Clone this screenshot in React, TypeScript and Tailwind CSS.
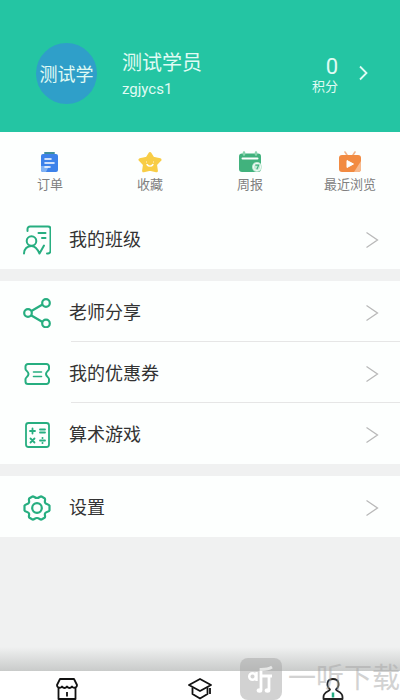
import React from 'react';

const OrderIcon = () => (
    <svg width="22" height="22" viewBox="0 0 22 22" fill="none">
        <rect x="5" y="1" width="11" height="2" rx="1" fill="#3f8f9c" />
        <rect x="2" y="3" width="17" height="18" rx="2" fill="#3d82ea" />
        <path d="M2 15h8l-3 6H4a2 2 0 0 1-2-2z" fill="#7fb2f5" />
        <path d="M6 8h6M6 12h9M6 16h5" stroke="#fff" strokeWidth="1.6" strokeLinecap="round" />
    </svg>
);

const StarIcon = () => (
    <svg width="24" height="22" viewBox="0 0 24 22" fill="none">
        <path
            d="M12 2.500l3 4.700 7 1.600-4.500 4.700.9 6.300-6.400-1.500-6.400 1.500.9-6.300L2 8.800l7-1.600z"
            fill="#f8cd46"
            stroke="#f8cd46"
            strokeWidth="3"
            strokeLinejoin="round"
        />
        <path d="M9 13.500c1.500 2.200 4.500 2.200 6 0" stroke="#fff" strokeWidth="1.400" strokeLinecap="round" />
        <path d="M8 11h1M15 11h1" stroke="#fff6cf" strokeWidth="1.200" />
    </svg>
);

const ReportIcon = () => (
    <svg width="24" height="22" viewBox="0 0 24 22" fill="none">
        <rect x="1" y="2.500" width="22" height="18.500" rx="3" fill="#41b27d" />
        <path d="M4.500 7.500h15" stroke="#fff" strokeWidth="2" strokeLinecap="round" />
        <path d="M6 1.500v2M18 1.500v2" stroke="#8ad3ae" strokeWidth="2.500" strokeLinecap="round" />
        <circle cx="19" cy="16" r="5" fill="#c4ead6" />
        <circle cx="19" cy="16" r="3.600" stroke="#fff" strokeWidth=".8" />
        <path d="M17.300 14.200h3.400l-1.900 4" stroke="#41b27d" strokeWidth="1.200" />
    </svg>
);

const HistoryIcon = () => (
    <svg width="24" height="22" viewBox="0 0 24 22" fill="none">
        <path d="M7 1l2 3M17 1l-2 3" stroke="#f2b48a" strokeWidth="1.600" strokeLinecap="round" />
        <rect x="1" y="4" width="22" height="17" rx="3" fill="#f28b42" />
        <path d="M23 10v8a3 3 0 0 1-3 3h-4z" fill="#f7b98d" />
        <path d="M9 9.500v7l6.500-3.500z" fill="#fff" stroke="#fff" strokeLinejoin="round" />
    </svg>
);

const ClassIcon = () => (
    <svg width="28" height="30" viewBox="0 0 28 30" fill="none" stroke="#27ae80" strokeWidth="2" strokeLinecap="round" strokeLinejoin="round">
        <path d="M4.500 6V4a2.500 2.500 0 0 1 2.500-2.500h18A2.500 2.500 0 0 1 27.500 4v22a2.500 2.500 0 0 1-2.500 2.500h-1" />
        <path d="M15.500 8h7M19 13h3.500" />
        <circle cx="8.500" cy="16" r="4.800" />
        <path d="M1 28.500c0-4.500 3.300-7.500 7.500-7.500 3.500 0 5.500 2 8 7.500L21 20.500" />
    </svg>
);

const ShareIcon = () => (
    <svg width="28" height="30" viewBox="0 0 28 30" fill="none" stroke="#27ae80" strokeWidth="2.200">
        <path d="M8 13.200L19.500 6.500M8 17.200l11.500 6.800" />
        <circle cx="5" cy="15" r="3.800" />
        <circle cx="23" cy="5" r="3.800" />
        <circle cx="23" cy="25.500" r="3.800" />
    </svg>
);

const CouponIcon = () => (
    <svg width="28" height="30" viewBox="0 0 28 30" fill="none" stroke="#27ae80" strokeWidth="2" strokeLinecap="round" strokeLinejoin="round">
        <path d="M5 5h18.500a2.500 2.500 0 0 1 2.500 2.500v2.500c0 1.500-3 2.500-3 5s3 3.500 3 5v2.500a2.500 2.500 0 0 1-2.500 2.500H5a2.500 2.500 0 0 1-2.500-2.500V20c0-1.500 3-2.500 3-5s-3-3.500-3-5V7.500A2.500 2.500 0 0 1 5 5z" />
        <path d="M10.500 13h8M10.500 17.500h8" strokeWidth="1.600" />
    </svg>
);

const MathIcon = () => (
    <svg width="28" height="30" viewBox="0 0 28 30" fill="none" stroke="#27ae80" strokeWidth="1.800" strokeLinecap="round">
        <rect x="3" y="3" width="23" height="24" rx="2.500" />
        <path d="M7 11h5M9.500 8.500v5M17 9.500h5M17 12.500h5" />
        <path d="M7.500 18.500l4 4M11.500 18.500l-4 4M17 20.500h5" />
        <path d="M19.500 18v.1M19.500 23v.1" strokeWidth="2" />
    </svg>
);

const SettingsIcon = () => (
    <svg width="28" height="30" viewBox="0 0 28 30" fill="none" stroke="#27ae80" strokeWidth="2.200" strokeLinejoin="round">
        <path d="M9.500 3.500C11 3 11.500 5 14 5s3-2 4.500-1.500l3 1.700c1.500 1.200-.3 2.800.6 4.500 1 1.800 3.800 1.300 4.400 3v4.600c-.6 1.700-3.400 1.200-4.400 3-.9 1.700.9 3.300-.6 4.500l-3 1.700C17 27 16.500 25 14 25s-3 2-4.500 1.500l-3-1.700c-1.500-1.200.3-2.800-.6-4.500-1-1.800-3.800-1.300-4.400-3v-4.600c.6-1.700 3.400-1.200 4.400-3 .9-1.700-.9-3.300.6-4.500z" />
        <circle cx="14" cy="15" r="4.800" />
    </svg>
);

const ShopTab = () => (
    <svg width="22" height="24" viewBox="0 0 22 24" fill="none" stroke="#111" strokeWidth="1.800" strokeLinejoin="round">
        <path d="M4 1h14l3 6c0 3-3.500 3.500-5 1.500-1.500 2-3.500 2-5 0-1.500 2-3.500 2-5 0C4.500 10.500 1 10 1 7z" />
        <path d="M2.500 10v11h17V10M11 14v4.500" />
    </svg>
);

const CourseTab = () => (
    <svg width="24" height="24" viewBox="0 0 24 24" fill="none" stroke="#111" strokeWidth="1.800" strokeLinejoin="round">
        <path d="M12 1L1 7l11 6 11-6z" />
        <path d="M4.500 9.500V16l7.500 4.500 7.500-4.500V9.500M22 10v6" />
    </svg>
);

const MineTab = () => (
    <svg width="22" height="24" viewBox="0 0 22 24" fill="none" stroke="#222" strokeWidth="1.800" strokeLinejoin="round">
        <path d="M8 11.500C4 8 4.500 1 11 1s7 7 3 10.500c0 2 6.500 2 6.500 7.500v2h-19v-2c0-5.500 6.500-5.500 6.500-7.500z" fill="#fff" />
        <path d="M11 14.500v5" stroke="#24ad83" strokeWidth="2.500" />
    </svg>
);

const Arrow = () => (
    <svg width="14" height="18" viewBox="0 0 14 18" fill="none" stroke="#b9b9b9" strokeWidth="1.300">
        <path d="M1.500 1.500L12.500 9l-11 7.500" />
    </svg>
);

const shortcuts = [
    { label: '订单', icon: <OrderIcon /> },
    { label: '收藏', icon: <StarIcon /> },
    { label: '周报', icon: <ReportIcon /> },
    { label: '最近浏览', icon: <HistoryIcon /> },
];

const groups = [
    [{ label: '我的班级', icon: <ClassIcon /> }],
    [
        { label: '老师分享', icon: <ShareIcon /> },
        { label: '我的优惠券', icon: <CouponIcon /> },
        { label: '算术游戏', icon: <MathIcon /> },
    ],
    [{ label: '设置', icon: <SettingsIcon /> }],
];

const tabs = [
    { name: 'shop', icon: <ShopTab /> },
    { name: 'course', icon: <CourseTab /> },
    { name: 'mine', icon: <MineTab /> },
];

const MenuRow = ({ label, icon, last }: { label: string; icon: React.ReactNode; last: boolean }) => (
    <li>
        <button className="flex h-[60px] w-full items-center gap-[18px] pt-1 pr-[21px] pl-[23px] text-left">
            {icon}
            <span className="flex-1 text-lg text-[#333]">{label}</span>
            <Arrow />
        </button>
        <div className={last ? 'ml-[71px] h-px' : 'ml-[71px] h-px bg-[#e6e6e6]'} />
    </li>
);

export default function App() {
    return (
        <div className="flex min-h-screen flex-col bg-[#f0f1f1] font-['Roboto','Noto_Sans_CJK_SC',sans-serif]">
            <header className="flex h-[132px] items-center bg-[#24c5a3] pt-3.5 pr-8 pl-9 text-[#e0fbf4]">
                <div className="flex size-[61px] shrink-0 items-center justify-center rounded-full bg-[#2f9fc9] pt-1 text-lg">
                    测试学
                </div>
                <div className="ml-[25px] flex-1 pt-1">
                    <h1 className="text-xl leading-7">测试学员</h1>
                    <p className="text-[15px] leading-6">zgjycs1</p>
                </div>
                <button className="flex items-center gap-5">
                    <span className="flex flex-col items-end pt-1">
                        <span className="text-[22px] leading-6">0</span>
                        <span className="text-[13px] leading-4">积分</span>
                    </span>
                    <svg width="10" height="16" viewBox="0 0 10 16" fill="none" stroke="currentColor" strokeWidth="1.800">
                        <path d="M2 1.500L8.500 8 2 14.500" />
                    </svg>
                </button>
            </header>

            <nav className="grid h-[76px] grid-cols-4 bg-[#fdfffe]">
                {shortcuts.map((s) => (
                    <button key={s.label} className="flex flex-col items-center pt-[19px]">
                        {s.icon}
                        <span className="text-[13px] leading-6 text-[#808080]">{s.label}</span>
                    </button>
                ))}
            </nav>

            <main className="flex flex-1 flex-col gap-3">
                {groups.map((rows, i) => (
                    <ul key={i} className="bg-[#fdfffe]">
                        {rows.map((r, j) => (
                            <MenuRow key={r.label} label={r.label} icon={r.icon} last={j === rows.length - 1} />
                        ))}
                    </ul>
                ))}
            </main>

            <div className="h-6 bg-linear-to-b from-[#f0f1f1] to-[#c9cbca]" />
            <footer className="relative">
                <nav className="grid h-[29px] grid-cols-3 overflow-hidden bg-white">
                    {tabs.map((t) => (
                        <button key={t.name} aria-label={t.name} className="flex justify-center pt-[7px]">
                            {t.icon}
                        </button>
                    ))}
                </nav>
                <div className="pointer-events-none absolute right-0 bottom-0 flex items-center gap-1.5 overflow-hidden opacity-50">
                    <svg width="42" height="42" viewBox="0 0 42 42" fill="none" stroke="#fff" strokeWidth="2.500">
                        <rect width="42" height="42" rx="8" fill="#a6a6a6" stroke="none" />
                        <circle cx="12.500" cy="18.500" r="3.300" />
                        <path d="M16.500 14v9" />
                        <path d="M32 9c-3 2-6 2.500-11 2.500V32M21 18h11M29 18v14" strokeWidth="2.800" />
                        <ellipse cx="19.500" cy="32.500" rx="2.800" ry="2.200" fill="#fff" stroke="none" />
                        <ellipse cx="27.500" cy="32.500" rx="2.800" ry="2.200" fill="#fff" stroke="none" />
                    </svg>
                    <span className="text-[28px] leading-[42px] whitespace-nowrap text-[#a6a6a6]">一听下载</span>
                </div>
            </footer>
        </div>
    );
}
